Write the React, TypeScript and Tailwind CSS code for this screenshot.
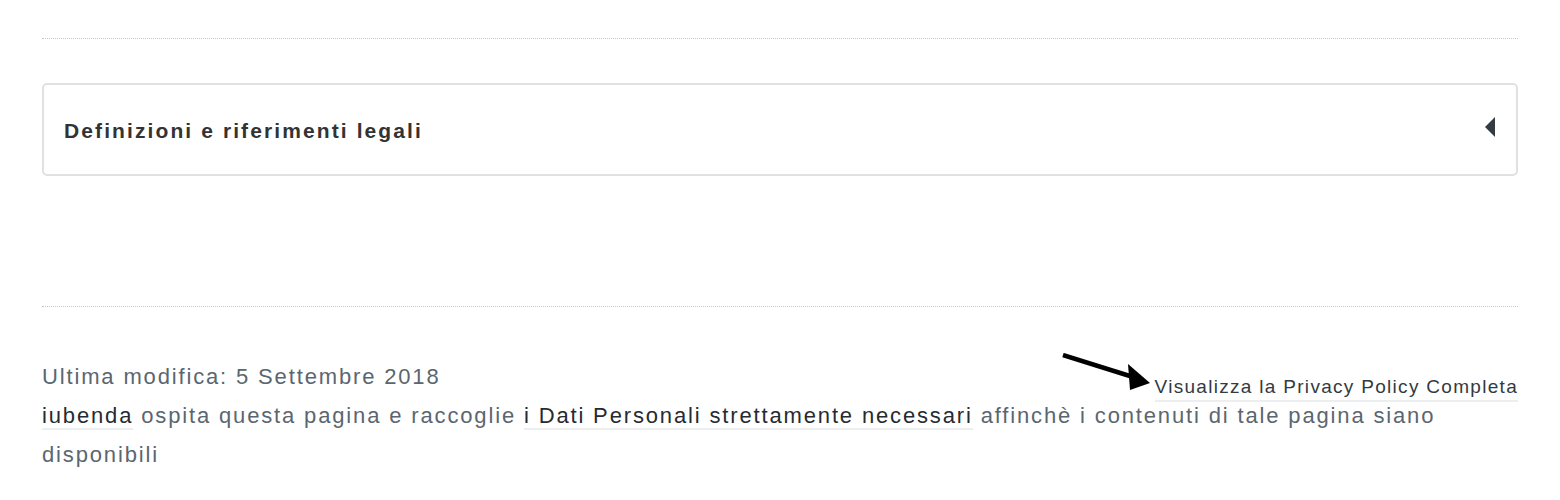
import React from "react";

export default function App() {
  return (
    <div className="w-[1560px] h-[500px] bg-white overflow-hidden px-[42px] pt-[38px]" style={{ fontFamily: '"Liberation Sans", Arial, sans-serif' }}>
      <div className="border-t border-dotted border-[#c8c8c8]" />
      <div className="mt-[44px] h-[93px] border-2 border-[#e1e1e1] rounded-[5px] flex items-center justify-between pl-[20px] pr-[21px]">
        <h3 className="text-[21px] font-bold text-[#333333] leading-none pt-[2px] tracking-[2.1px]">Definizioni e riferimenti legali</h3>
        <svg width="10" height="20" viewBox="0 0 10 20" className="mb-[5px]">
          <polygon points="10,0 10,20 0,10" fill="#333c45" />
        </svg>
      </div>
      <div className="mt-[130px] border-t border-dotted border-[#c8c8c8]" />
      <div className="relative pt-[50px] text-[22px] leading-[39px] tracking-[1.85px] text-[#5b6670]">
        <p>Ultima modifica: 5 Settembre 2018</p>
        <p className="pr-[60px]">
          <a className="text-[#262b31] border-b-2 border-[#eceeef]">iubenda</a> ospita questa pagina e raccoglie{" "}
          <a className="text-[#262b31] border-b-2 border-[#eceeef]">i Dati Personali strettamente necessari</a> affinchè i contenuti di tale pagina siano disponibili
        </p>
        <div className="absolute right-0 top-[69px] flex items-end">
          <svg width="92" height="40" viewBox="0 0 92 40" className="absolute left-[-94px] top-[-23px]">
            <line x1="2" y1="2" x2="72" y2="24" stroke="#000" strokeWidth="4.5" />
            <polygon points="89,30 67,11 69,37" fill="#000" />
          </svg>
          <a className="text-[19px] leading-[22px] tracking-[1.3px] text-[#333a42] border-b-2 border-[#eceeef] pb-[2px]">Visualizza la Privacy Policy Completa</a>
        </div>
      </div>
    </div>
  );
}
